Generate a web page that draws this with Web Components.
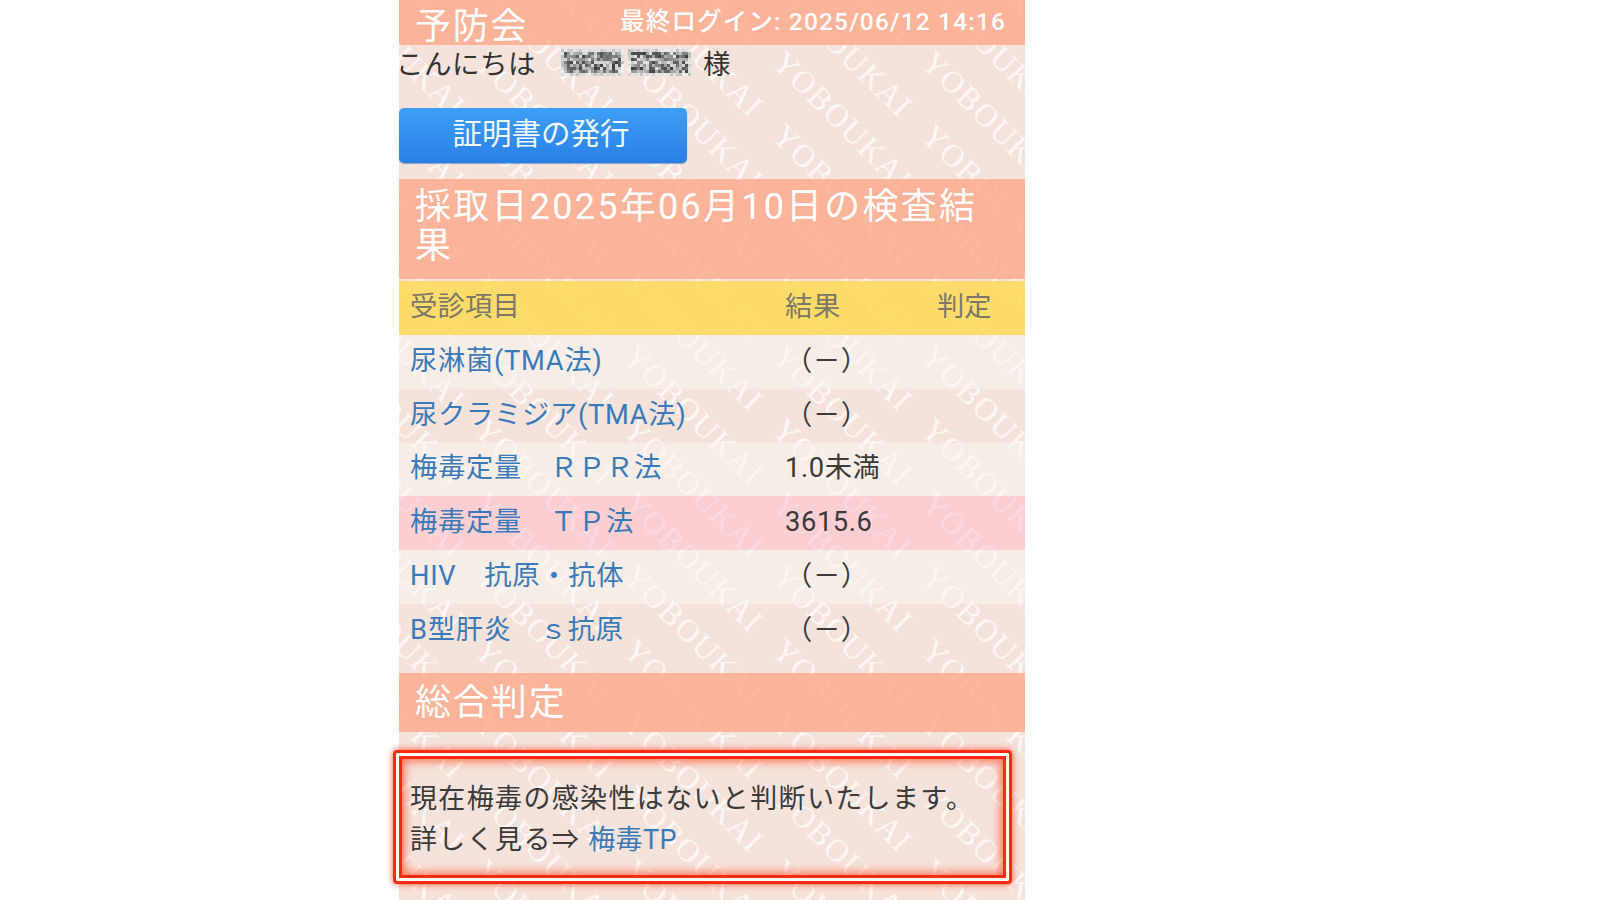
<!DOCTYPE html>
<html lang="ja">
<head>
<meta charset="utf-8">
<title>予防会</title>
<style>
  html, body { margin: 0; height: 100%; background: #fff; overflow: hidden; }
  body { font-family: Roboto, "Noto Sans CJK JP", sans-serif; color: #333; }
</style>
</head>
<body>
<yobo-page>
  <yobo-header title-text="予防会" login="最終ログイン: 2025/06/12 14:16"></yobo-header>
  <yobo-greeting></yobo-greeting>
  <yobo-button>証明書の発行</yobo-button>
  <yobo-band>採取日2025年06月10日の検査結果</yobo-band>
  <yobo-table>
    <yobo-row kind="head" item="受診項目" result="結果" judge="判定"></yobo-row>
    <yobo-row kind="odd" item="尿淋菌(TMA法)" result="（－）"></yobo-row>
    <yobo-row item="尿クラミジア(TMA法)" result="（－）"></yobo-row>
    <yobo-row kind="odd" item="梅毒定量　ＲＰＲ法" result="1.0未満"></yobo-row>
    <yobo-row kind="alert" item="梅毒定量　ＴＰ法" result="3615.6"></yobo-row>
    <yobo-row kind="odd" item="HIV　抗原・抗体" result="（－）"></yobo-row>
    <yobo-row item="B型肝炎　ｓ抗原" result="（－）"></yobo-row>
  </yobo-table>
  <yobo-band class="summary">総合判定</yobo-band>
  <yobo-notice>
    現在梅毒の感染性はないと判断いたします。<br>
    詳しく見る⇒ <a href="#">梅毒TP</a>
  </yobo-notice>
</yobo-page>

<script>
// watermark tile, text runs past the tile so it is drawn at the neighbouring offsets too
function watermark() {
  const tileW = 149, tileH = 73.5;
  let texts = '';
  for (let ix = -1; ix <= 1; ix++) {
    for (let iy = -3; iy <= 2; iy++) {
      const x = 73.5 + ix * tileW, y = 64 + iy * tileH;
      texts += `<text transform="translate(${x} ${y}) rotate(45)">YOBOUKAI</text>`;
    }
  }
  const svg = `<svg xmlns="http://www.w3.org/2000/svg" width="${tileW}" height="${tileH}" viewBox="0 0 ${tileW} ${tileH}">` +
    `<g font-family="Liberation Serif" font-size="32" letter-spacing="1.5" fill="#fff" fill-opacity="0.72">${texts}</g></svg>`;
  return `url("data:image/svg+xml,${encodeURIComponent(svg)}")`;
}

class YoboPage extends HTMLElement {
  constructor() {
    super();
    this.attachShadow({mode: 'open'}).innerHTML = `
      <style>
        :host {
          display: block;
          width: 626px;
          height: 900px;
          margin-left: 399px;
          background-color: #f5e3db;
          background-image: ${watermark()};
          background-size: 149px 73.5px;
        }
      </style>
      <slot></slot>`;
  }
}

class YoboHeader extends HTMLElement {
  constructor() {
    super();
    this.attachShadow({mode: 'open'}).innerHTML = `
      <style>
        :host {
          display: flex;
          justify-content: space-between;
          align-items: center;
          height: 45px;
          padding: 0 19px 0 16px;
          background: rgba(252, 166, 138, .8);
          color: #fff;
        }
        #name { font-size: 36px; letter-spacing: 1.7px; line-height: 45px; padding-top: 9px; }
        #login { font-size: 24.5px; font-weight: 500; letter-spacing: 1.15px; line-height: 45px; white-space: nowrap; padding-bottom: 2px; }
      </style>
      <span id="name"></span><span id="login"></span>`;
  }

  connectedCallback() {
    this.shadowRoot.querySelector('#name').textContent = this.getAttribute('title-text');
    this.shadowRoot.querySelector('#login').textContent = this.getAttribute('login');
  }
}

// mosaic that hides the patient name in the screenshot
class BlurName extends HTMLElement {
  constructor() {
    super();
    let seed = 7;
    const rand = () => (seed = (seed * 16807) % 2147483647) / 2147483647;
    let cells = '';
    [0, 67].forEach(left => {
      for (let row = 0; row < 9; row++) {
        for (let col = 0; col < 21; col++) {
          const inner = row > 0 && row < 8 && col > 0 && col < 20;
          const v = inner ? 60 + rand() * 170 : 190 + rand() * 50;
          const c = Math.round(v);
          cells += `<rect x="${left + col * 3}" y="${row * 3}" width="3" height="3" fill="rgb(${c},${c},${c})"/>`;
        }
      }
    });
    this.attachShadow({mode: 'open'}).innerHTML = `
      <style>
        :host { display: block; width: 130px; height: 27px; }
        svg { display: block; filter: blur(.4px); }
      </style>
      <svg width="130" height="27" viewBox="0 0 130 27">${cells}</svg>`;
  }
}

class YoboGreeting extends HTMLElement {
  constructor() {
    super();
    this.attachShadow({mode: 'open'}).innerHTML = `
      <style>
        :host {
          display: flex;
          align-items: center;
          box-sizing: border-box;
          height: 38px;
          padding-bottom: 4px;
          margin-left: -3px;
          font-size: 27.5px;
          letter-spacing: .5px;
          color: #333;
        }
        blur-name { margin: 0 12px 0 25px; }
      </style>
      <span>こんにちは</span><blur-name></blur-name><span>様</span>`;
  }
}

class YoboButton extends HTMLElement {
  constructor() {
    super();
    this.attachShadow({mode: 'open'}).innerHTML = `
      <style>
        :host {
          display: flex;
          justify-content: center;
          align-items: center;
          box-sizing: border-box;
          width: 288px;
          height: 55px;
          margin-top: 25px;
          padding: 0 4px 10px 0;
          border-radius: 5px;
          background: linear-gradient(#3d9ff7, #2a7fe6);
          box-shadow: 0 1px 1px rgba(40, 90, 170, .5);
          color: #f2f8ff;
          font-size: 29.5px;
        }
      </style>
      <slot></slot>`;
  }
}

class YoboBand extends HTMLElement {
  constructor() {
    super();
    this.attachShadow({mode: 'open'}).innerHTML = `
      <style>
        :host {
          display: block;
          box-sizing: border-box;
          margin-top: 16px;
          padding: 9px 30px 13px 16px;
          background: rgba(252, 166, 138, .8);
          color: #fff;
          font-size: 36px;
          letter-spacing: 2.25px;
          line-height: 39px;
        }
        :host(.summary) {
          margin-top: 15px;
          height: 59px;
          padding: 11px 17px 0 16px;
          letter-spacing: 1.9px;
        }
      </style>
      <slot></slot>`;
  }
}

class YoboTable extends HTMLElement {
  constructor() {
    super();
    this.attachShadow({mode: 'open'}).innerHTML = `
      <style>
        :host { display: block; margin-top: 2px; }
      </style>
      <slot></slot>`;
  }
}

class YoboRow extends HTMLElement {
  static get observedAttributes() {
    return ['item', 'result', 'judge'];
  }

  constructor() {
    super();
    this.attachShadow({mode: 'open'}).innerHTML = `
      <style>
        :host {
          display: grid;
          grid-template-columns: 375px 152px 1fr;
          align-items: center;
          box-sizing: border-box;
          height: 53.8px;
          padding: 0 0 2px 11px;
          font-size: 27.3px;
          line-height: 36px;
          color: #3a3a3a;
        }
        :host([kind="head"]) { height: 54px; background: rgba(253, 218, 90, .88); color: #7b7868; }
        :host([kind="odd"]) { background: rgba(245, 245, 240, .55); }
        :host([kind="alert"]) { background: rgba(255, 192, 203, .55); }
        #item { color: #3a7ab8; letter-spacing: .7px; white-space: pre; }
        :host([kind="head"]) #item { color: inherit; letter-spacing: .2px; }
        #result { letter-spacing: .6px; }
      </style>
      <span id="item"></span><span id="result"></span><span id="judge"></span>`;
  }

  attributeChangedCallback(attr, oldVal, newVal) {
    this.shadowRoot.querySelector(`#${attr}`).textContent = newVal;
  }
}

class YoboNotice extends HTMLElement {
  constructor() {
    super();
    this.attachShadow({mode: 'open'}).innerHTML = `
      <style>
        :host {
          display: block;
          box-sizing: border-box;
          width: 619px;
          height: 134px;
          margin: 18px 0 0 -6px;
          padding: 26px 14px 0 14px;
          border: 3px solid #ff2a12;
          border-radius: 4px;
          box-shadow: 0 0 7px rgba(255, 50, 20, .85),
            inset 0 0 0 3px #fff,
            inset 0 0 0 6px #ff2a12,
            inset 0 0 9px 9px rgba(255, 80, 40, .7);
          font-size: 27px;
          letter-spacing: 1.35px;
          line-height: 41px;
          color: #3a3a3a;
        }
        ::slotted(a) { color: #3a7ab8; text-decoration: none; letter-spacing: .4px; }
      </style>
      <slot></slot>`;
  }
}

customElements.define('yobo-page', YoboPage);
customElements.define('yobo-header', YoboHeader);
customElements.define('blur-name', BlurName);
customElements.define('yobo-greeting', YoboGreeting);
customElements.define('yobo-button', YoboButton);
customElements.define('yobo-band', YoboBand);
customElements.define('yobo-table', YoboTable);
customElements.define('yobo-row', YoboRow);
customElements.define('yobo-notice', YoboNotice);
</script>
</body>
</html>
